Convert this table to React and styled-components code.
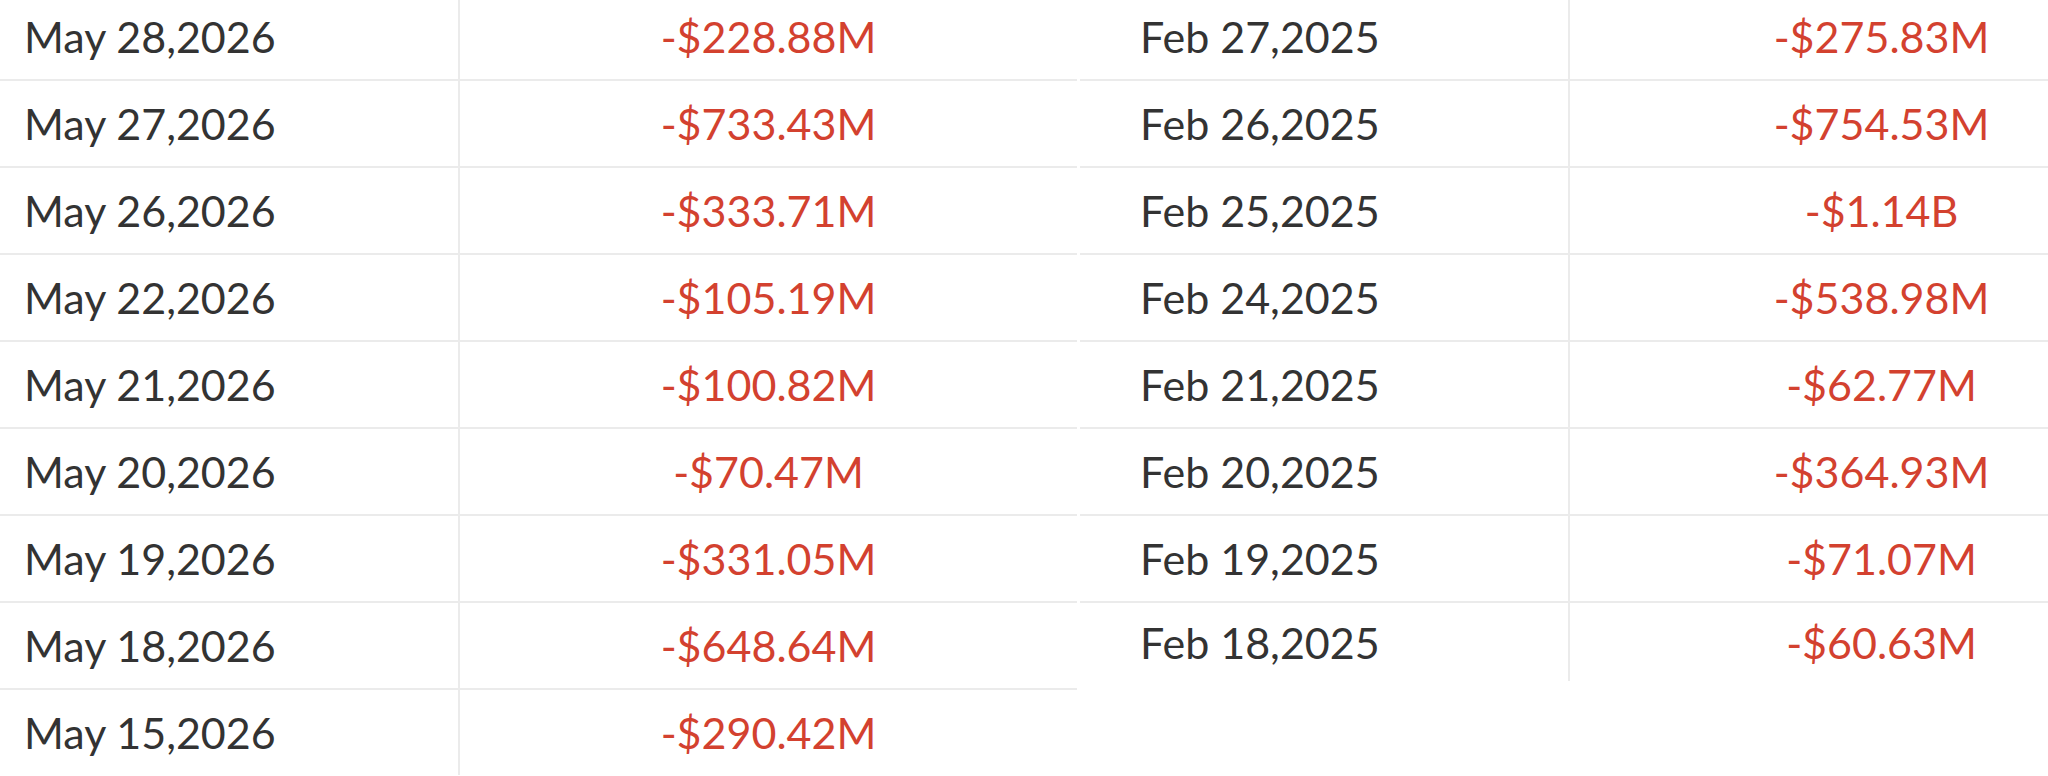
import React from 'react'
import styled, { createGlobalStyle } from 'styled-components'

const GlobalStyle = createGlobalStyle`
  html, body {
    margin: 0;
    padding: 0;
    background: #fff;
    overflow: hidden;
  }
  body {
    font-family: Lato, 'Noto Sans', sans-serif;
  }
`

const Page = styled.div`
  display: flex;
  gap: 3px;
  width: 2300px;
  margin: -6px 0 0 -36px;
`

const Table = styled.div`
  display: flex;
  flex-direction: column;
  width: 1113px;
  flex: none;
`

const Row = styled.div`
  display: grid;
  grid-template-columns: ${(p) => p.$dateWidth}px 1fr;
  height: ${(p) => (p.$short ? 78 : 85)}px;
  border-bottom: ${(p) => (p.$last ? 'none' : '2px solid #ebebeb')};
`

const DateCell = styled.div`
  display: flex;
  align-items: center;
  padding-left: 60px;
  border-right: 2px solid #ebebeb;
  font-size: 43px;
  color: #333;
`

const ValueCell = styled.div`
  display: flex;
  align-items: center;
  justify-content: center;
  font-size: 43px;
  color: #d3412f;
`

const left = [
  ['May 28,2026', '-$228.88M'],
  ['May 27,2026', '-$733.43M'],
  ['May 26,2026', '-$333.71M'],
  ['May 22,2026', '-$105.19M'],
  ['May 21,2026', '-$100.82M'],
  ['May 20,2026', '-$70.47M'],
  ['May 19,2026', '-$331.05M'],
  ['May 18,2026', '-$648.64M'],
  ['May 15,2026', '-$290.42M']
]

const right = [
  ['Feb 27,2025', '-$275.83M'],
  ['Feb 26,2025', '-$754.53M'],
  ['Feb 25,2025', '-$1.14B'],
  ['Feb 24,2025', '-$538.98M'],
  ['Feb 21,2025', '-$62.77M'],
  ['Feb 20,2025', '-$364.93M'],
  ['Feb 19,2025', '-$71.07M'],
  ['Feb 18,2025', '-$60.63M']
]

const FlowTable = ({ rows, dateWidth, shortLast }) => (
  <Table>
    {rows.map(([date, value], i) => {
      const last = i === rows.length - 1
      return (
        <Row key={date} $dateWidth={dateWidth} $last={last} $short={last && shortLast}>
          <DateCell>{date}</DateCell>
          <ValueCell>{value}</ValueCell>
        </Row>
      )
    })}
  </Table>
)

const App = () => (
  <>
    <GlobalStyle />
    <Page>
      <FlowTable rows={left} dateWidth={496} />
      <FlowTable rows={right} dateWidth={490} shortLast />
    </Page>
  </>
)

export default App
